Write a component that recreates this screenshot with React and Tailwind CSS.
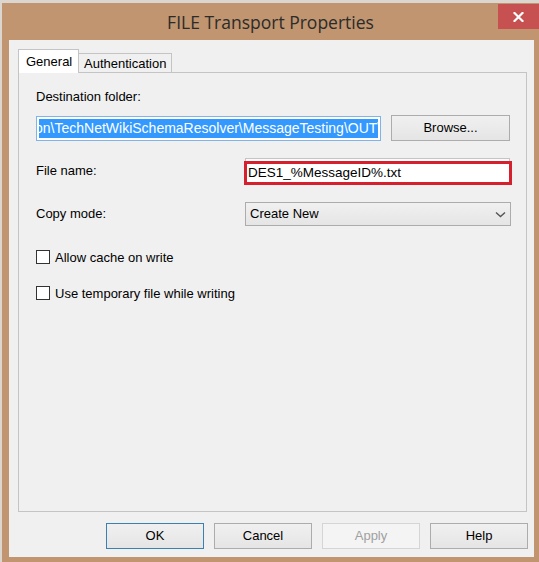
import React from "react";

const sans = { fontFamily: '"Liberation Sans", Arial, sans-serif' };

function WinButton({ children, primary, disabled }) {
  const border = primary
    ? "border-[#3c7fb1]"
    : disabled
    ? "border-[#d5d5d5]"
    : "border-[#acacac]";
  const bg = disabled
    ? "bg-[#f4f4f4]"
    : "bg-gradient-to-b from-[#f0f0f0] to-[#e5e5e5]";
  const text = disabled ? "text-[#a0a0a0]" : "text-[#000]";
  return (
    <div
      className={`w-[98px] h-[26px] border ${border} ${bg} ${text} flex items-center justify-center text-[13px]`}
    >
      {children}
    </div>
  );
}

function Checkbox({ label }) {
  return (
    <div className="flex items-center h-[14px]">
      <div className="w-[14px] h-[14px] border border-[#333] bg-white shrink-0" />
      <span className="ml-[5px] text-[13px] leading-none text-[#000]">{label}</span>
    </div>
  );
}

export default function App() {
  return (
    <div className="w-[539px] h-[562px] bg-[#dcd6d0] pt-[3px] pl-[2px] overflow-hidden" style={sans}>
      <div className="h-full bg-[#c0956f] flex flex-col">
        {/* title bar */}
        <div className="h-[37px] grid grid-cols-[41px_1fr_41px] shrink-0">
          <div />
          <div
            className="flex items-center justify-center text-[17.5px] text-[#2b2b2b] pt-[1px]"
            style={{ fontFamily: '"Open Sans", "Noto Sans", sans-serif' }}
          >
            FILE Transport Properties
          </div>
          <div className="mt-[1px] h-[25px] bg-[#c75050] flex items-center justify-center">
            <svg width="11" height="10" viewBox="0 0 11 10">
              <path d="M1.5 1 L9.5 9 M9.5 1 L1.5 9" stroke="#fff" strokeWidth="2.2" strokeLinecap="square" />
            </svg>
          </div>
        </div>

        {/* client area */}
        <div className="flex-1 ml-[7px] mr-[5px] mb-[5px] bg-[#f0f0f0] pl-[9px] pr-[6px] pt-[9px] pb-[8px] flex flex-col">
          {/* tabs */}
          <div className="flex items-end h-[24px] relative z-10">
            <div className="w-[61px] h-[24px] bg-white border border-b-0 border-[#c4c4c4] text-[13px] text-[#000] pl-[7px] pt-[2px]">
              General
            </div>
            <div className="w-[93px] h-[20px] bg-[#f0f0f0] border border-l-0 border-[#c4c4c4] text-[13px] text-[#000] pl-[5px] pt-0">
              Authentication
            </div>
          </div>

          {/* tab page */}
          <div className="flex-1 -mt-px mr-px border border-[#c4c4c4] bg-[#f0f0f0] pl-[17px] pr-[16px] pt-[16px] flex flex-col text-[13px] text-[#000]">
            <div className="leading-[16px]">Destination folder:</div>

            <div className="mt-[10px] flex items-center h-[26px] gap-[10px]">
              <div className="w-[345px] h-[25px] border border-[#7eb4ea] bg-white p-[2px] overflow-hidden">
                <div className="h-full bg-[#3399ff] overflow-hidden flex items-center">
                  <span className="whitespace-nowrap text-white text-[14px] -ml-[4px] leading-none">
                    on\TechNetWikiSchemaResolver\MessageTesting\OUT\
                  </span>
                </div>
              </div>
              <div className="w-[119px] h-[26px] border border-[#acacac] bg-gradient-to-b from-[#f0f0f0] to-[#e5e5e5] flex items-center justify-center">
                Browse...
              </div>
            </div>

            <div className="mt-[17px] grid grid-cols-[209px_265px] items-center h-[26px]">
              <span>File name:</span>
              <div className="relative h-[26px] border-t border-x border-[#c4c4c4] bg-white">
                <div className="absolute -left-[2px] -right-[3px] top-[2px] -bottom-px border-[3px] border-[#d6202d] flex items-center pl-[1px] text-[13.5px]">
                  DES1_%MessageID%.txt
                </div>
              </div>
            </div>

            <div className="mt-[18px] grid grid-cols-[209px_266px] items-center h-[24px]">
              <span>Copy mode:</span>
              <div className="h-[24px] border border-[#acacac] bg-gradient-to-b from-[#f0f0f0] to-[#e5e5e5] flex items-center justify-between pl-[4px] pr-[4px]">
                <span>Create New</span>
                <svg width="11" height="7" viewBox="0 0 11 7">
                  <path d="M1 1.5 L5.5 5.5 L10 1.5" stroke="#555" strokeWidth="1.4" fill="none" />
                </svg>
              </div>
            </div>

            <div className="mt-[24px]">
              <Checkbox label="Allow cache on write" />
            </div>
            <div className="mt-[22px]">
              <Checkbox label="Use temporary file while writing" />
            </div>
          </div>

          {/* bottom buttons */}
          <div className="mt-[11px] flex justify-end gap-[10px]">
            <WinButton primary>OK</WinButton>
            <WinButton>Cancel</WinButton>
            <WinButton disabled>Apply</WinButton>
            <WinButton>Help</WinButton>
          </div>
        </div>
      </div>
    </div>
  );
}
